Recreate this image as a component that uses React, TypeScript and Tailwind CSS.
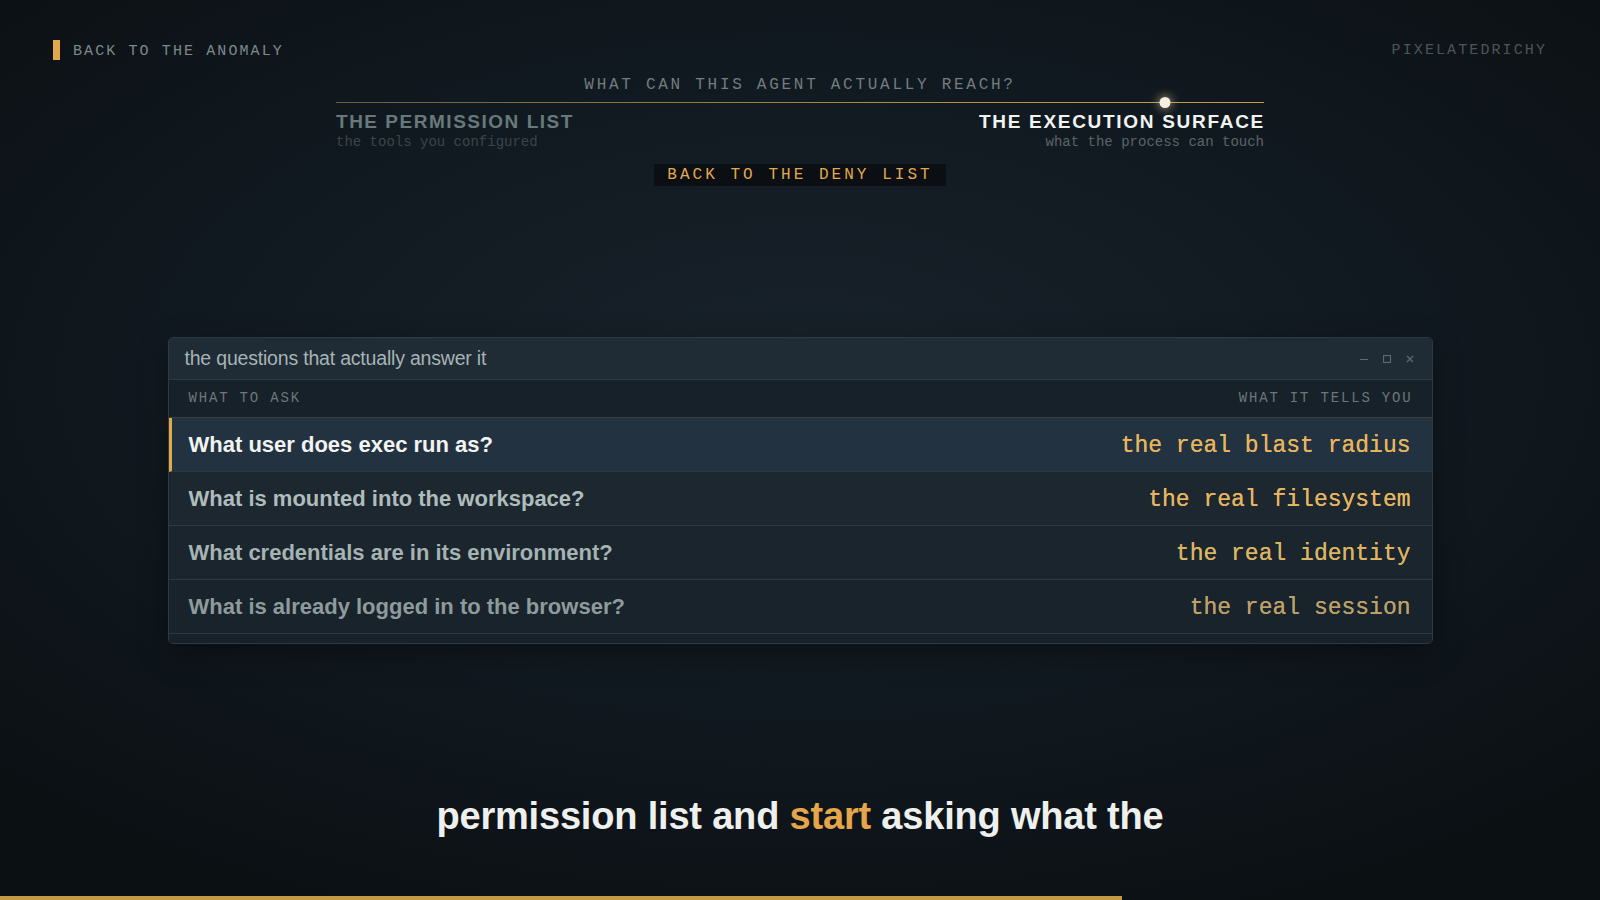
const MONO = "font-['Liberation_Mono',monospace]";
const SANS = "font-['Liberation_Sans',Arial,sans-serif]";

const ROWS = [
    {
        q: "What user does exec run as?",
        a: "the real blast radius",
        row: "bg-[#223240] border-l-[3px] border-l-[#e3a849] pl-[17px]",
        qc: "text-[#f2f4f2]",
        ac: "text-[#e8b55c]",
    },
    {
        q: "What is mounted into the workspace?",
        a: "the real filesystem",
        row: "bg-[#1c2730] pl-[20px]",
        qc: "text-[#afbcbc]",
        ac: "text-[#e6b560]",
    },
    {
        q: "What credentials are in its environment?",
        a: "the real identity",
        row: "bg-[#1a252d] pl-[20px]",
        qc: "text-[#a5b3b3]",
        ac: "text-[#dcb462]",
    },
    {
        q: "What is already logged in to the browser?",
        a: "the real session",
        row: "bg-[#19232b] pl-[20px]",
        qc: "text-[#8e9b9c]",
        ac: "text-[#bca069]",
    },
];

const WindowControls = () => (
    <div className="flex items-center gap-[15px] text-[#5c6b73]">
        <svg width="8" height="8" viewBox="0 0 8 8">
            <line x1="0" y1="4.5" x2="8" y2="4.5" stroke="currentColor" strokeWidth="1" />
        </svg>
        <svg width="8" height="8" viewBox="0 0 8 8">
            <rect x="0.5" y="0.5" width="7" height="7" fill="none" stroke="currentColor" strokeWidth="1.2" />
        </svg>
        <svg width="8" height="8" viewBox="0 0 8 8">
            <path d="M1 1 L7 7 M7 1 L1 7" stroke="currentColor" strokeWidth="1.2" />
        </svg>
    </div>
);

export default function App() {
    return (
        <div className="relative flex h-[900px] w-full flex-col overflow-hidden bg-[radial-gradient(ellipse_70%_65%_at_50%_42%,#18222a_0%,#111920_55%,#0b1013_100%)]">
            {/* Top bar */}
            <div className="flex items-center justify-between px-[53px] pt-[40px]">
                <div className="flex items-center gap-[13px]">
                    <span className="h-[20px] w-[7px] bg-[#e3a849]" />
                    <span className={`${MONO} translate-y-[2px] text-[15px] leading-[20px] tracking-[0.14em] text-[#7d898b]`}>
                        BACK TO THE ANOMALY
                    </span>
                </div>
                <span className={`${MONO} translate-y-[1px] text-[15px] leading-[20px] tracking-[0.14em] text-[#4d5457]`}>
                    PIXELATEDRICHY
                </span>
            </div>

            {/* Spectrum header */}
            <div className="mx-auto mt-[14px] flex w-[928px] flex-col items-center">
                <div className={`${MONO} translate-y-[1px] text-[16px] leading-[20px] tracking-[0.17em] text-[#717d80]`}>
                    WHAT CAN THIS AGENT ACTUALLY REACH?
                </div>
                <div className="relative mt-[8px] h-px w-full bg-[linear-gradient(90deg,#6a5b3c,#b08a42_60%,#c99d48)]">
                    <span className="absolute left-[89.3%] top-[-5px] h-[11px] w-[11px] -translate-x-1/2 rounded-full bg-[#f4efe2] shadow-[0_0_8px_2px_rgba(255,225,160,0.45)]" />
                </div>
                <div className="mt-[8px] flex w-full justify-between">
                    <div className="flex flex-col">
                        <span className={`${SANS} text-[19px] font-bold leading-[22px] tracking-[0.08em] text-[#67797b]`}>
                            THE PERMISSION LIST
                        </span>
                        <span className={`${MONO} text-[14px] leading-[18px] text-[#3c4448]`}>
                            the tools you configured
                        </span>
                    </div>
                    <div className="flex flex-col items-end">
                        <span className={`${SANS} mr-[-1px] text-[19px] font-bold leading-[22px] tracking-[0.09em] text-[#f1f3f0]`}>
                            THE EXECUTION SURFACE
                        </span>
                        <span className={`${MONO} text-[14px] leading-[18px] text-[#5c6367]`}>
                            what the process can touch
                        </span>
                    </div>
                </div>
                <button
                    className={`${MONO} mt-[13px] bg-[#0b0f13] px-[13px] text-[16px] leading-[22px] tracking-[0.19em] text-[#e3a94e]`}
                >
                    BACK TO THE DENY LIST
                </button>
            </div>

            {/* Questions window */}
            <div className="mx-auto mt-[151px] h-[307px] w-[1265px] overflow-hidden rounded-[5px] border border-[#2c3a44] bg-[#182028] shadow-[0_10px_30px_rgba(0,0,0,0.35)]">
                <div className="flex h-[42px] items-center justify-between border-b border-[#2c3a44] bg-[#1f2c36] pl-[16px] pr-[18px]">
                    <span className={`${SANS} text-[19.5px] tracking-[-0.01em] text-[#a7b3b4]`}>
                        the questions that actually answer it
                    </span>
                    <WindowControls />
                </div>
                <div className="flex h-[38px] items-center justify-between border-b border-[#3d3f36] bg-[#172129] pl-[20px] pr-[19px]">
                    <span className={`${MONO} text-[14px] tracking-[0.13em] text-[#6b777b]`}>WHAT TO ASK</span>
                    <span className={`${MONO} text-[14px] tracking-[0.13em] text-[#6b777b]`}>WHAT IT TELLS YOU</span>
                </div>
                {ROWS.map((r) => (
                    <div
                        key={r.q}
                        className={`flex h-[54px] items-center justify-between border-b border-[#2b3943] pr-[21px] ${r.row}`}
                    >
                        <span className={`${SANS} text-[22px] font-bold ${r.qc}`}>{r.q}</span>
                        <span className={`${MONO} mt-[4px] text-[23px] [text-shadow:0_0_0.6px_currentColor] ${r.ac}`}>
                            {r.a}
                        </span>
                    </div>
                ))}
                <div className="h-[54px] bg-[#182129]" />
            </div>

            {/* Caption */}
            <div className={`${SANS} mt-[150px] text-center text-[38px] font-bold leading-[44px] tracking-[-0.005em] text-[#eef0ee]`}>
                permission list and <span className="text-[#e5a64a]">start</span> asking what the
            </div>

            {/* Progress */}
            <div className="mt-auto h-[4px] w-[1122px] bg-[#c49a45]" />
        </div>
    );
}
